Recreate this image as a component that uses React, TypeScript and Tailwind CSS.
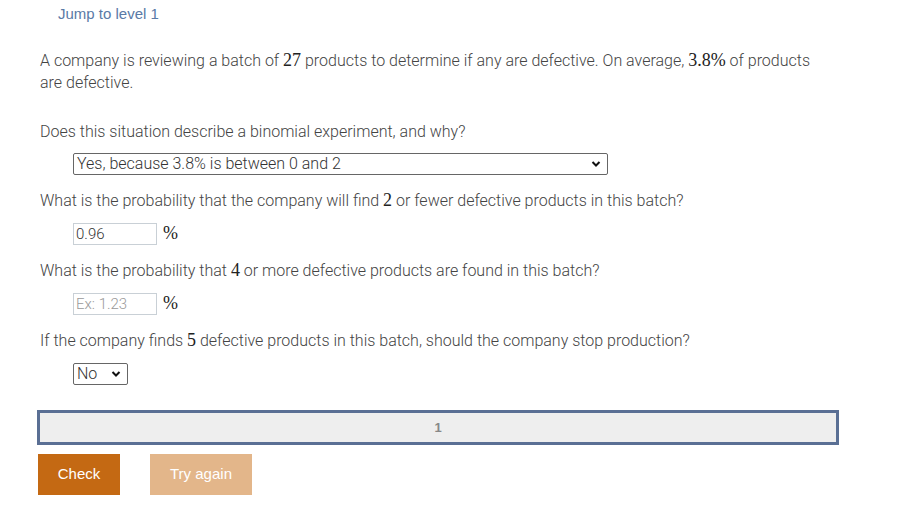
import React from "react";

const M = ({ children }: { children: React.ReactNode }) => (
  <span className="font-['Liberation_Serif',serif] text-[18px] leading-[0] text-[#222] font-normal">{children}</span>
);

const Chevron = () => (
  <svg width="10" height="8" viewBox="0 0 10 8" className="shrink-0">
    <path d="M1.5 2 L5 5.5 L8.5 2" fill="none" stroke="#111" strokeWidth="2" />
  </svg>
);

export default function App() {
  return (
    <div className="w-[910px] h-[527px] bg-white font-['Roboto',sans-serif] text-[#444] font-light text-[16px]">
      <div className="pt-[4px] pl-[58px] h-[24px] leading-[20px] text-[15px] font-normal text-[#5a7aa6] font-['Liberation_Sans',sans-serif]">
        Jump to level 1
      </div>
      <div className="mt-[26px] ml-[40px] w-[790px] h-[43px] leading-[22px]">
        A company is reviewing a batch of <M>27</M> products to determine if any are defective. On average, <M>3.8%</M> of products are defective.
      </div>
      <div className="mt-[27px] ml-[40px] h-[22px] leading-[24px]">Does this situation describe a binomial experiment, and why?</div>
      <div className="mt-[11px] ml-[73px] w-[535px] h-[22px] border border-[#666] rounded-[2px] flex items-center justify-between pl-[3px] pr-[6px] text-[#333] leading-none">
        <span>Yes, because 3.8% is between 0 and 2</span>
        <Chevron />
      </div>
      <div className="mt-[14px] ml-[40px] h-[22px] leading-[24px]">
        What is the probability that the company will find <M>2</M> or fewer defective products in this batch?
      </div>
      <div className="mt-[12px] ml-[73px] flex items-center h-[22px]">
        <div className="w-[84px] h-[22px] border border-[#c9d0d6] flex items-center pl-[2px] text-[15px] text-[#333]">0.96</div>
        <span className="ml-[6px] leading-none"><M>%</M></span>
      </div>
      <div className="mt-[14px] ml-[40px] h-[22px] leading-[24px]">
        What is the probability that <M>4</M> or more defective products are found in this batch?
      </div>
      <div className="mt-[12px] ml-[73px] flex items-center h-[22px]">
        <div className="w-[84px] h-[22px] border border-[#c9d0d6] flex items-center pl-[2px] text-[15px] text-[#999]">Ex: 1.23</div>
        <span className="ml-[6px] leading-none"><M>%</M></span>
      </div>
      <div className="mt-[14px] ml-[40px] h-[22px] leading-[24px]">
        If the company finds <M>5</M> defective products in this batch, should the company stop production?
      </div>
      <div className="mt-[12px] ml-[73px] w-[55px] h-[22px] border border-[#666] rounded-[2px] flex items-center justify-between pl-[3px] pr-[6px] text-[#333] leading-none">
        <span>No</span>
        <Chevron />
      </div>
      <div className="mt-[25px] ml-[37px] w-[802px] h-[35px] border-[3px] border-[#5a6f94] bg-[#eeeeee] flex items-center justify-center text-[13px] font-bold text-[#888] font-['Liberation_Sans',sans-serif]">
        1
      </div>
      <div className="mt-[9px] ml-[38px] flex gap-[30px] font-['Liberation_Sans',sans-serif] font-normal text-[15px] text-white">
        <div className="w-[82px] h-[41px] bg-[#c46913] flex items-center justify-center">Check</div>
        <div className="w-[102px] h-[41px] bg-[#e3b68a] flex items-center justify-center">Try again</div>
      </div>
    </div>
  );
}
